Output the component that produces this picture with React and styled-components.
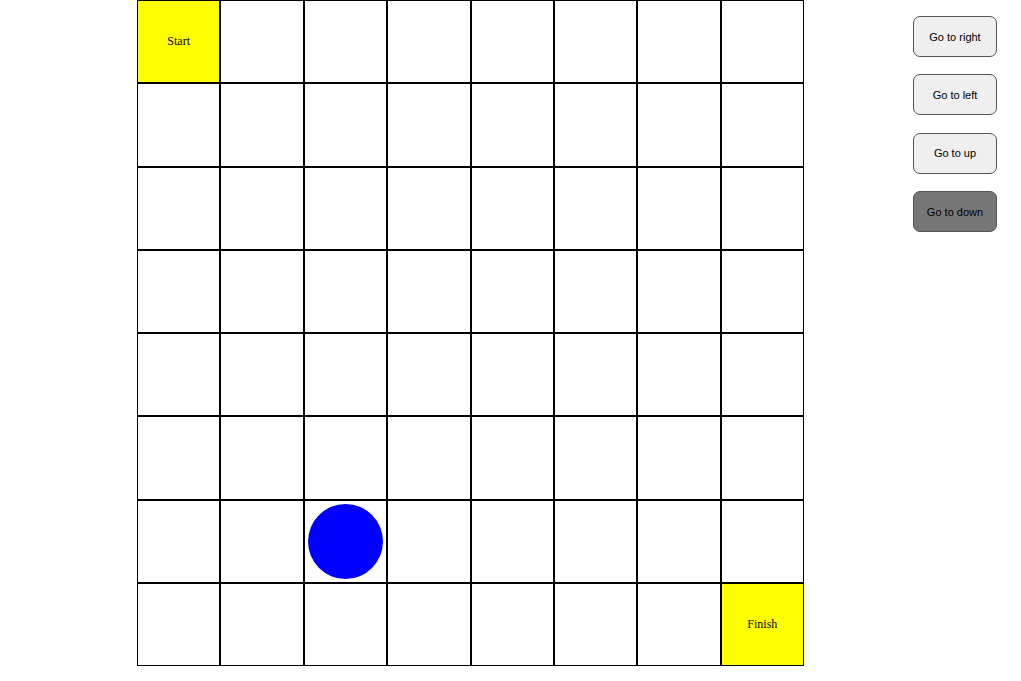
import styled, { createGlobalStyle } from "styled-components";

const GlobalStyle = createGlobalStyle`
  body {
    margin: 0;
    background: #fff;
    font-family: "Liberation Serif", serif;
  }
`;

const Page = styled.div`
  display: flex;
  align-items: flex-start;
  padding-left: 137px;
  padding-right: 24px;
`;

const Board = styled.div`
  display: grid;
  grid-template-columns: repeat(8, 1fr);
  grid-template-rows: repeat(8, 1fr);
  width: 667px;
  height: 666px;
`;

const Cell = styled.div`
  box-sizing: border-box;
  border: 1px solid #000;
  background: ${(p) => (p.$goal ? "#ffff00" : "#fff")};
  display: flex;
  align-items: center;
  justify-content: center;
  font-family: "Liberation Serif", serif;
  font-size: 12px;
  color: #000;
`;

const Ball = styled.div`
  width: 75px;
  height: 75px;
  border-radius: 50%;
  background: #0000ff;
`;

const Controls = styled.div`
  margin-left: auto;
  display: flex;
  flex-direction: column;
  gap: 17.4px;
  padding-top: 16px;
`;

const MoveButton = styled.button`
  box-sizing: border-box;
  width: 84px;
  height: 41px;
  border: 1px solid #555;
  border-radius: 7px;
  background: ${(p) => (p.$active ? "#777777" : "#efefef")};
  color: #000;
  font-family: "Liberation Sans", Arial, sans-serif;
  font-size: 11px;
  padding: 0;
`;

const ball = { row: 6, col: 2 };

function App() {
  const cells = [];
  for (let r = 0; r < 8; r++) {
    for (let c = 0; c < 8; c++) {
      const isStart = r === 0 && c === 0;
      const isFinish = r === 7 && c === 7;
      cells.push(
        <Cell key={`${r}-${c}`} $goal={isStart || isFinish}>
          {isStart && "Start"}
          {isFinish && "Finish"}
          {r === ball.row && c === ball.col && <Ball />}
        </Cell>
      );
    }
  }
  return (
    <>
      <GlobalStyle />
      <Page>
        <Board>{cells}</Board>
        <Controls>
          <MoveButton>Go to right</MoveButton>
          <MoveButton>Go to left</MoveButton>
          <MoveButton>Go to up</MoveButton>
          <MoveButton $active>Go to down</MoveButton>
        </Controls>
      </Page>
    </>
  );
}

export default App;
